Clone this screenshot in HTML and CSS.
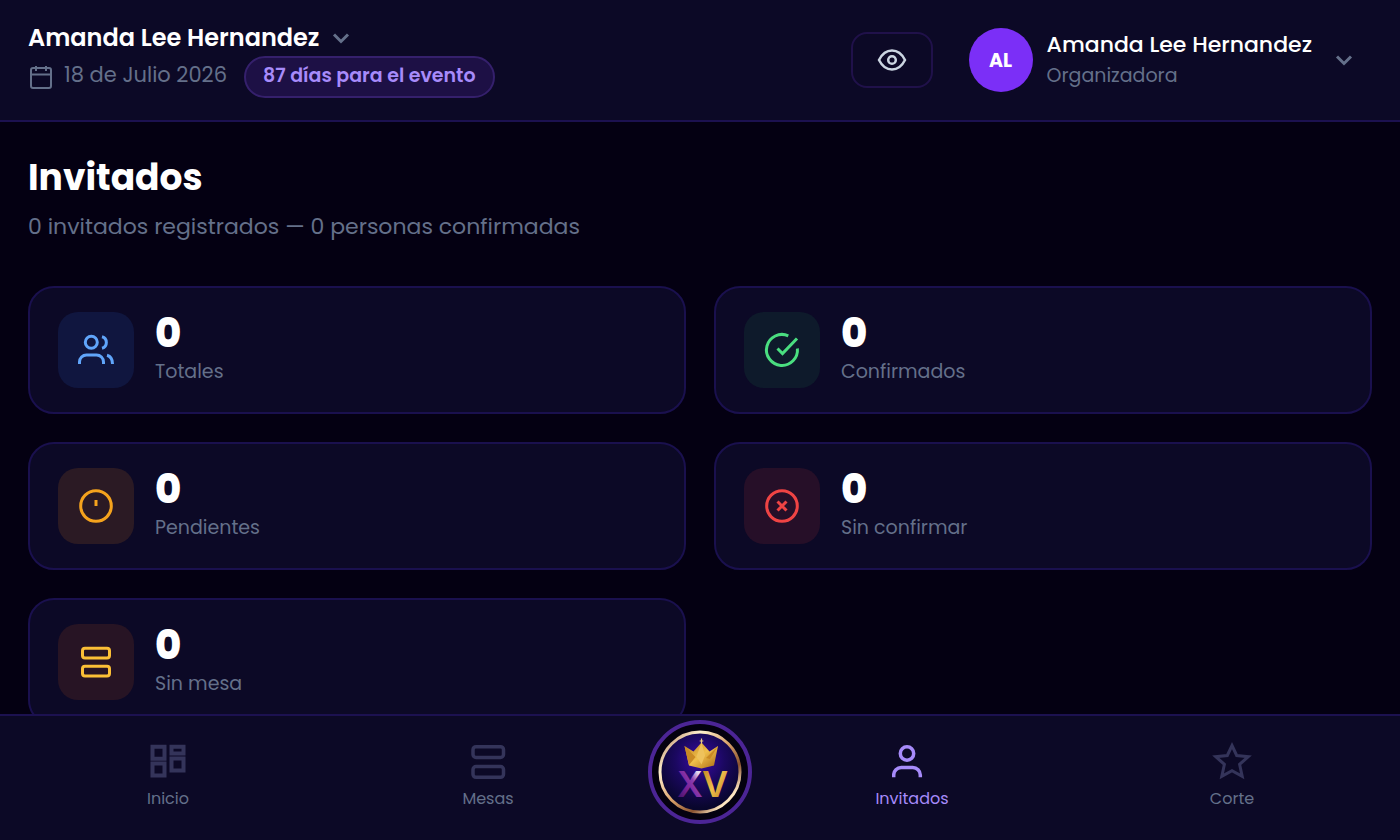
FILE: index.html
```html
<!DOCTYPE html>
<html lang="es">
<head>
  <meta charset="UTF-8">
  <meta name="viewport" content="width=device-width, initial-scale=1.0">
  <title>Invitados</title>
  <link rel="stylesheet" href="styles.css">
</head>
<body>

  <header class="topbar">
    <div class="event">
      <button type="button" class="event-name">
        Amanda Lee Hernandez
        <svg class="chevron" viewBox="0 0 20 20"><path d="M3 6.500l7 7 7-7"/></svg>
      </button>
      <div class="event-meta">
        <svg class="calendar" viewBox="0 0 28 28"><rect x="3" y="5" width="20" height="20" rx="2"/><path d="M3 11.500h20M8 3v5M18 3v5"/></svg>
        <span class="event-date">18 de Julio 2026</span>
        <span class="countdown">87 días para el evento</span>
      </div>
    </div>

    <div class="account">
      <button type="button" class="preview-btn" aria-label="Vista previa">
        <svg viewBox="0 0 32 32"><path d="M3 16C6 10 10.500 6.500 16 6.500S26 10 29 16C26 22 21.500 25.500 16 25.500S6 22 3 16z"/><circle cx="16" cy="16" r="3.800"/></svg>
      </button>
      <button type="button" class="user-btn">
        <span class="avatar">AL</span>
        <span class="user-info">
          <span class="user-name">Amanda Lee Hernandez</span>
          <span class="user-role">Organizadora</span>
        </span>
        <svg class="chevron" viewBox="0 0 20 20"><path d="M3 6.500l7 7 7-7"/></svg>
      </button>
    </div>
  </header>

  <main class="content">
    <h1>Invitados</h1>
    <p class="subtitle">0 invitados registrados — 0 personas confirmadas</p>

    <!-- Guest counters -->
    <section class="stats">
      <article class="stat-card">
        <div class="stat-icon blue">
          <svg viewBox="0 0 40 40"><circle cx="15.300" cy="12.300" r="6"/><path d="M3.500 34v-2a7 7 0 0 1 7-7h10a7 7 0 0 1 7 7v2M26 6.700c5.800 1.500 5.800 10 0 11.500M31 25.300c3.800 1 5.500 4 5.500 8.700"/></svg>
        </div>
        <div class="stat-text">
          <strong>0</strong>
          <span>Totales</span>
        </div>
      </article>
      <article class="stat-card">
        <div class="stat-icon green">
          <svg viewBox="0 0 40 40"><path d="M26.300 5.800A15.500 15.500 0 1 0 35.400 18.500M15.500 18.500l5 5L35 8.500"/></svg>
        </div>
        <div class="stat-text">
          <strong>0</strong>
          <span>Confirmados</span>
        </div>
      </article>
      <article class="stat-card">
        <div class="stat-icon amber">
          <svg viewBox="0 0 40 40"><circle cx="20" cy="20" r="15.300"/><path d="M20 14v6"/></svg>
        </div>
        <div class="stat-text">
          <strong>0</strong>
          <span>Pendientes</span>
        </div>
      </article>
      <article class="stat-card">
        <div class="stat-icon red">
          <svg viewBox="0 0 40 40"><circle cx="20" cy="20" r="15.300"/><path d="M15.500 15.500l9 9M24.500 15.500l-9 9"/></svg>
        </div>
        <div class="stat-text">
          <strong>0</strong>
          <span>Sin confirmar</span>
        </div>
      </article>
      <article class="stat-card">
        <div class="stat-icon yellow">
          <svg viewBox="0 0 40 40"><rect x="6.500" y="6.200" width="27" height="9.800" rx="2.500"/><rect x="6.500" y="24.300" width="27" height="9.800" rx="2.500"/></svg>
        </div>
        <div class="stat-text">
          <strong>0</strong>
          <span>Sin mesa</span>
        </div>
      </article>
    </section>
  </main>

  <nav class="bottom-nav">
    <a href="#inicio" class="nav-item">
      <svg viewBox="0 0 40 40"><path stroke-width="4" d="M4.500 5.700h12v12h-12zM23.500 5.700h12v6.800h-12zM23.500 17.500h12v12h-12zM4.500 22.500h12v12h-12z"/></svg>
      Inicio
    </a>
    <a href="#mesas" class="nav-item">
      <svg viewBox="0 0 40 40"><g stroke-width="3.500"><rect x="5" y="5.700" width="30.500" height="10.800" rx="3"/><rect x="5" y="25.500" width="30.500" height="10.800" rx="3"/></g></svg>
      Mesas
    </a>
    <a href="#xv" class="nav-logo" aria-label="XV">
      <svg viewBox="0 0 104 104">
        <defs>
          <radialGradient id="night" cx="50%" cy="35%" r="60%">
            <stop offset="0" stop-color="#3a0aa8"/>
            <stop offset="0.500" stop-color="#1b0861"/>
            <stop offset="1" stop-color="#08062c"/>
          </radialGradient>
          <linearGradient id="ring" x1="0" y1="0" x2="1" y2="1">
            <stop offset="0" stop-color="#a9704a"/>
            <stop offset="0.250" stop-color="#fff0cf"/>
            <stop offset="0.500" stop-color="#d9a16a"/>
            <stop offset="0.700" stop-color="#8a5330"/>
            <stop offset="0.850" stop-color="#ffe9c4"/>
            <stop offset="1" stop-color="#b67a45"/>
          </linearGradient>
          <linearGradient id="gold" x1="0" y1="0" x2="1" y2="1">
            <stop offset="0" stop-color="#b87a1c"/>
            <stop offset="0.500" stop-color="#f0bf4c"/>
            <stop offset="1" stop-color="#a8680f"/>
          </linearGradient>
          <linearGradient id="purple" x1="0" y1="1" x2="1" y2="0">
            <stop offset="0" stop-color="#2c0c55"/>
            <stop offset="0.400" stop-color="#7a2299"/>
            <stop offset="0.600" stop-color="#8a3cb0"/>
            <stop offset="0.780" stop-color="#e4dcf2"/>
          </linearGradient>
        </defs>
        <circle cx="52" cy="52" r="50" fill="#04010f" stroke="#4c2596" stroke-width="4"/>
        <circle cx="52" cy="52" r="40" fill="url(#night)" stroke="url(#ring)" stroke-width="3"/>
        <path d="M36.500 26l9 5.500 8-9 8 9 8.500-5.500-4 19.500-12.500 3-12.500-3z" fill="url(#gold)"/>
        <path d="M53.500 22.500l3.500 13-3.500 9-5-8z" fill="#eec25c"/>
        <path d="M36.500 26l11 11-6.500 8zM58 38l12-12-8 13z" fill="#c98a24"/>
        <path d="M53.500 18.500v5M51.700 21h3.600" stroke="#e9c98a" stroke-width="1.200"/>
        <text class="logo-letter" x="29" y="77" fill="url(#purple)">X</text>
        <text class="logo-letter" x="54" y="77" fill="url(#gold)">V</text>
      </svg>
    </a>
    <a href="#invitados" class="nav-item active">
      <svg viewBox="0 0 40 40"><g stroke-width="3.500"><circle cx="15" cy="12.500" r="6.700"/><path d="M1.700 36.300V34a7.500 7.500 0 0 1 7.500-7.500h11.600a7.500 7.500 0 0 1 7.500 7.500v2.300"/></g></svg>
      Invitados
    </a>
    <a href="#corte" class="nav-item">
      <svg viewBox="0 0 40 40"><path d="M20 4.500l4.700 10 11.600 1.200-8.700 7.700 2.600 12L20 29.700l-10.200 5.700 2.600-12-8.700-7.700 11.600-1.200z"/></svg>
      Corte
    </a>
  </nav>

</body>
</html>
```
FILE: styles.css
```css
* {
  box-sizing: border-box;
}
body {
  font-family: Poppins, Inter, sans-serif;
  background-color: #040012;
  color: #fff;
  margin: 0;
  height: 100vh;
  display: flex;
  flex-direction: column;
}
button {
  font: inherit;
  color: inherit;
  background: none;
  border: 0;
  padding: 0;
  cursor: pointer;
}
svg {
  fill: none;
  stroke: currentColor;
  flex-shrink: 0;
}

/* Header */
.topbar {
  display: flex;
  justify-content: space-between;
  align-items: center;
  height: 122px;
  flex-shrink: 0;
  padding: 0 28px;
  background-color: #0c0926;
  border-bottom: 2px solid #1c1150;
}
.event {
  padding-bottom: 2px;
}
.event-name {
  display: flex;
  align-items: center;
  gap: 12px;
  font-size: 24px;
  font-weight: 600;
  line-height: 36px;
}
.chevron {
  width: 20px;
  height: 20px;
  color: #64708a;
  stroke-width: 3;
}
.event-meta {
  display: flex;
  align-items: center;
  color: #64708a;
}
.calendar {
  width: 28px;
  height: 28px;
  margin-right: 8px;
  stroke-width: 2;
}
.event-date {
  padding-bottom: 5px;
  font-size: 21px;
  margin-right: 17px;
}
.countdown {
  height: 42px;
  padding: 0 17px;
  border: 2px solid #35206c;
  border-radius: 21px;
  background-color: #1d1045;
  color: #a78bfa;
  font-size: 19px;
  font-weight: 600;
  line-height: 36px;
}
.account {
  display: flex;
  align-items: center;
  gap: 36px;
}
.preview-btn {
  display: flex;
  align-items: center;
  justify-content: center;
  width: 82px;
  height: 56px;
  border: 2px solid #20114a;
  border-radius: 16px;
  color: #cbd5e1;
}
.preview-btn svg {
  width: 32px;
  height: 32px;
  stroke-width: 2.5;
}
.user-btn {
  display: flex;
  align-items: center;
  padding-right: 18px;
  text-align: left;
}
.avatar {
  display: flex;
  align-items: center;
  justify-content: center;
  width: 64px;
  height: 64px;
  margin-right: 14px;
  border-radius: 50%;
  background-color: #7b2ff7;
  font-size: 19px;
  font-weight: 700;
}
.user-info {
  display: flex;
  flex-direction: column;
  margin-right: 22px;
}
.user-name {
  font-size: 22px;
  font-weight: 500;
  line-height: 32px;
}
.user-role {
  color: #64708a;
  font-size: 19px;
  line-height: 30px;
}

/* Content */
.content {
  flex: 1;
  min-height: 0;
  overflow-y: auto;
  scrollbar-width: none;
  padding: 32px 28px;
}
h1 {
  margin: 0;
  font-size: 36px;
  font-weight: 700;
  line-height: 48px;
}
.subtitle {
  margin: 8px 0 42px;
  color: #64708a;
  font-size: 22px;
  line-height: 34px;
}
.stats {
  display: grid;
  grid-template-columns: 1fr 1fr;
  gap: 28px;
}
.stat-card {
  display: flex;
  align-items: center;
  gap: 21px;
  height: 128px;
  padding: 0 28px;
  border: 2px solid #1a104e;
  border-radius: 26px;
  background-color: #0c0926;
}
.stat-icon {
  display: flex;
  align-items: center;
  justify-content: center;
  width: 76px;
  height: 76px;
  border-radius: 20px;
}
.stat-icon svg {
  width: 40px;
  height: 40px;
  stroke-width: 3;
}
.blue {
  background-color: #10163f;
  color: #60a5fa;
}
.green {
  background-color: #0e1a2b;
  color: #4ade80;
}
.amber {
  background-color: #2b1a24;
  color: #f5a31d;
}
.red {
  background-color: #260f28;
  color: #ef4444;
}
.yellow {
  background-color: #271424;
  color: #fbbf36;
}
.stat-text {
  display: flex;
  flex-direction: column;
}
.stat-text strong {
  font-size: 40px;
  font-weight: 800;
  line-height: 44px;
}
.stat-text span {
  color: #64708a;
  font-size: 19px;
  line-height: 34px;
}

/* Bottom navigation */
.bottom-nav {
  display: flex;
  height: 126px;
  flex-shrink: 0;
  padding: 0 8px;
  background-color: #0c0926;
  border-top: 2px solid #1c1150;
}
.nav-item {
  flex: 1;
  display: flex;
  flex-direction: column;
  align-items: center;
  gap: 6px;
  padding-top: 25px;
  color: #64708a;
  font-size: 16px;
  line-height: 24px;
  text-decoration: none;
}
.nav-item svg {
  width: 40px;
  height: 40px;
  color: #34345a;
  stroke-width: 3;
}
.nav-item.active,
.nav-item.active svg {
  color: #a78bfa;
}
.nav-logo {
  width: 104px;
  padding-top: 4px;
}
.nav-logo svg {
  display: block;
  width: 104px;
  height: 104px;
  stroke: none;
}
.logo-letter {
  font-family: Inter, sans-serif;
  font-size: 36px;
  font-weight: 600;
}
```
